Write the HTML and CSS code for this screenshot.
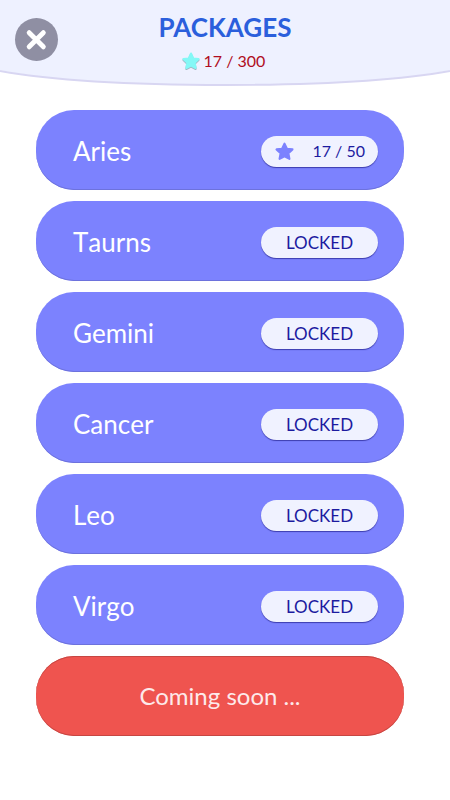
FILE: index.html
```html
<!DOCTYPE html>
<html lang="en">
<head>
<meta charset="utf-8">
<meta name="viewport" content="width=device-width, initial-scale=1">
<title>Packages</title>
<link rel="stylesheet" href="styles.css">
</head>
<body>
<svg class="defs" aria-hidden="true">
  <symbol id="star" viewBox="0 0 20 20">
    <path d="M10 2.500 L12.300 7.400 L17.600 8 L13.700 11.700 L14.700 17 L10 14.600 L5.300 17 L6.300 11.700 L2.400 8 L7.700 7.400 Z" fill="currentColor" stroke="currentColor" stroke-width="2" stroke-linejoin="round"/>
  </symbol>
</svg>
<header class="header">
  <svg class="header-shape" viewBox="0 0 450 86" preserveAspectRatio="none" aria-hidden="true">
    <path class="header-fill" d="M0 0 H450 V70 C390 82 310 85 225 85 C140 85 60 82 0 70 Z"/>
    <path class="header-edge" d="M450 71 C390 82 310 85 225 85 C140 85 60 82 0 71"/>
  </svg>
  <button class="close" type="button" aria-label="Close">
    <svg viewBox="0 0 44 44" aria-hidden="true"><path d="M14.500 15 L29 29.500 M29 15 L14.500 29.500"/></svg>
  </button>
  <div class="heading">
    <h1 class="title">PACKAGES</h1>
    <p class="total"><svg class="total-star" aria-hidden="true"><use href="#star"/></svg>17 / 300</p>
  </div>
</header>
<main class="packages">
  <button class="card" type="button"><span class="name">Aries</span><span class="pill progress"><svg class="pill-star" aria-hidden="true"><use href="#star"/></svg>17 / 50</span></button>
  <button class="card" type="button"><span class="name">Taurns</span><span class="pill">LOCKED</span></button>
  <button class="card" type="button"><span class="name">Gemini</span><span class="pill">LOCKED</span></button>
  <button class="card" type="button"><span class="name">Cancer</span><span class="pill">LOCKED</span></button>
  <button class="card" type="button"><span class="name">Leo</span><span class="pill">LOCKED</span></button>
  <button class="card" type="button"><span class="name">Virgo</span><span class="pill">LOCKED</span></button>
  <button class="card soon" type="button">Coming soon ...</button>
</main>
</body>
</html>
```

FILE: styles.css
```css
* {
  box-sizing: border-box;
}

body {
  margin: 0;
  background: #fff;
  font-family: Lato, sans-serif;
}

button {
  border: 0;
  font: inherit;
  cursor: pointer;
}

.defs {
  position: absolute;
  width: 0;
  height: 0;
}

.header {
  position: relative;
  display: grid;
  grid-template-columns: 44px 1fr 44px;
  align-items: start;
  padding: 11px 15px;
  min-height: 86px;
}

.header-shape {
  position: absolute;
  inset: 0;
  z-index: -1;
  width: 100%;
  height: 100%;
}

.header-fill {
  fill: #eef1ff;
}

.header-edge {
  fill: none;
  stroke: #d8d6f2;
  stroke-width: 2;
}

.close {
  width: 43px;
  height: 43px;
  margin-top: 7px;
  padding: 0;
  border-radius: 50%;
  background: #8f8fa3;
}

.close svg {
  display: block;
  width: 100%;
  fill: none;
  stroke: #fff;
  stroke-width: 5;
  stroke-linecap: round;
}

.heading {
  text-align: center;
}

.title {
  margin: 0;
  color: #2b5fdc;
  font-size: 26px;
  font-weight: 700;
  line-height: 32px;
}

.total {
  display: flex;
  align-items: center;
  justify-content: center;
  gap: 3px;
  margin: 6px 0 0;
  padding-right: 4px;
  color: #b00d22;
  font-size: 16px;
  line-height: 24px;
}

.total-star {
  width: 20px;
  height: 20px;
  color: #84f8f6;
  filter: drop-shadow(0 1px 0 #9fb5c4);
}

.packages {
  display: flex;
  flex-direction: column;
  gap: 11px;
  padding: 24px 46px 24px 36px;
}

.card {
  display: flex;
  align-items: center;
  justify-content: space-between;
  height: 80px;
  padding: 2px 26px 0 37px;
  border-radius: 38px;
  background: #7c82fe;
  box-shadow: inset 0 -1px 0 #6d72dc;
  color: #fff;
  font-size: 26px;
}

.name {
  font-kerning: none;
}

.pill {
  display: flex;
  align-items: center;
  justify-content: center;
  width: 117px;
  height: 31px;
  border-radius: 16px;
  background: #f0f2ff;
  box-shadow: 0 1px 1px #3c3cae;
  color: #1c1ba0;
  font-size: 17px;
}

.progress {
  justify-content: space-between;
  padding: 0 13px;
  font-size: 16px;
  line-height: 20px;
}

.pill-star {
  width: 21px;
  height: 21px;
  color: #7c82fe;
}

.soon {
  justify-content: center;
  padding: 0;
  background: #ef544f;
  box-shadow: inset 0 1px 0 #c64642, inset 0 -1px 0 #c64642;
  color: #fde9ea;
  font-size: 24px;
  line-height: 28px;
}
```
